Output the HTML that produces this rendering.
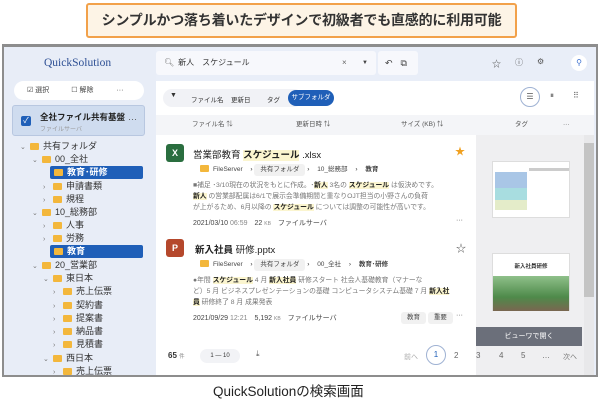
<!DOCTYPE html>
<html><head><meta charset="utf-8"><style>
*{box-sizing:border-box;margin:0;padding:0}
body{width:600px;height:407px;background:#fff;font-family:"Liberation Sans","Noto Sans CJK JP",sans-serif;position:relative;overflow:hidden;color:#333}
.a{position:absolute}
.banner{left:86px;top:3px;width:431px;height:35px;border:2px solid #f2a14a;background:#fdf4e6;border-radius:3px;font-size:14px;font-weight:bold;color:#333;text-align:center;line-height:31px;white-space:nowrap;letter-spacing:-0.2px}
.frame{left:2px;top:44px;width:596px;height:333px;border:2px solid #8d8d8d;border-top:3px solid #8d8d8d;background:#e9eef8;overflow:hidden}
.side{left:0;top:0;width:152px;height:330px;background:#e8edf7}
.t{font-size:9px;color:#333;white-space:nowrap;line-height:12px}
.fold{display:inline-block;width:9px;height:7px;background:#f3b73c;border-radius:1px;margin-right:4px;vertical-align:-1px}
.chev{font-size:7px;color:#777;display:inline-block;width:10px}
.sel{background:#1f5fb8;color:#fff;font-weight:bold;border-radius:2px}
.chip{display:inline-block;font-size:6.5px;padding:2px 6px;background:#f1f1f1;border-radius:3px;color:#444;line-height:8px}
.hl{background:#fbf5cf;font-weight:bold;color:#222}
.nw{white-space:nowrap}
</style></head><body>
<div class="a banner">シンプルかつ落ち着いたデザインで初級者でも直感的に利用可能</div>
<div class="a frame">
 <div class="a side">
  <div class="a" style="left:40px;top:10px;font-family:'Liberation Serif',serif;font-size:11.5px;color:#2d4f94">QuickSolution</div>
  <div class="a nw" style="left:10px;top:34px;width:130px;height:19px;background:#fff;border-radius:10px;font-size:7px;line-height:19px;color:#444">
   <span style="margin-left:13px">☑ 選択</span><span style="margin-left:22px">☐ 解除</span><span style="margin-left:23px">···</span></div>
  <div class="a" style="left:8px;top:58px;width:133px;height:31px;background:#cfdcef;border:1px solid #b8c7e0;border-radius:3px">
   <div class="a" style="left:8px;top:10px;width:10px;height:10px;background:#1f5fb8;border-radius:2px;color:#fff;font-size:8px;line-height:10px;text-align:center">✓</div>
   <div class="a nw" style="left:27px;top:5px;font-size:8.5px;font-weight:bold;color:#222">全社ファイル共有基盤</div>
   <div class="a nw" style="left:27px;top:18px;font-size:6px;color:#999">ファイルサーバ</div>
   <div class="a" style="left:115px;top:8px;font-size:9px;color:#555">···</div></div>
  <div class="a t" style="left:16px;top:93px"><span class="chev">⌄</span><span class="fold"></span>共有フォルダ</div>
  <div class="a t" style="left:28px;top:106px"><span class="chev">⌄</span><span class="fold"></span>00_全社</div>
  <div class="a t sel" style="left:46px;top:119px;width:93px;height:13px;line-height:13px;padding-left:4px"><span class="fold"></span>教育･研修</div>
  <div class="a t" style="left:39px;top:133px"><span class="chev">›</span><span class="fold"></span>申請書類</div>
  <div class="a t" style="left:39px;top:146px"><span class="chev">›</span><span class="fold"></span>規程</div>
  <div class="a t" style="left:28px;top:159px"><span class="chev">⌄</span><span class="fold"></span>10_総務部</div>
  <div class="a t" style="left:39px;top:172px"><span class="chev">›</span><span class="fold"></span>人事</div>
  <div class="a t" style="left:39px;top:185px"><span class="chev">›</span><span class="fold"></span>労務</div>
  <div class="a t sel" style="left:46px;top:198px;width:93px;height:13px;line-height:13px;padding-left:4px"><span class="fold"></span>教育</div>
  <div class="a t" style="left:28px;top:212px"><span class="chev">⌄</span><span class="fold"></span>20_営業部</div>
  <div class="a t" style="left:39px;top:225px"><span class="chev">⌄</span><span class="fold"></span>東日本</div>
  <div class="a t" style="left:49px;top:238px"><span class="chev">›</span><span class="fold"></span>売上伝票</div>
  <div class="a t" style="left:49px;top:252px"><span class="chev">›</span><span class="fold"></span>契約書</div>
  <div class="a t" style="left:49px;top:265px"><span class="chev">›</span><span class="fold"></span>提案書</div>
  <div class="a t" style="left:49px;top:278px"><span class="chev">›</span><span class="fold"></span>納品書</div>
  <div class="a t" style="left:49px;top:291px"><span class="chev">›</span><span class="fold"></span>見積書</div>
  <div class="a t" style="left:39px;top:305px"><span class="chev">⌄</span><span class="fold"></span>西日本</div>
  <div class="a t" style="left:49px;top:318px"><span class="chev">›</span><span class="fold"></span>売上伝票</div>
 </div>
 <!-- search -->
 <div class="a nw" style="left:152px;top:4px;width:220px;height:24px;background:#f7f8fc;border-radius:3px;font-size:8px;line-height:24px;color:#333">
  <span style="color:#777;margin-left:8px">🔍︎</span><span style="margin-left:4px">新人　スケジュール</span>
  <span class="a" style="left:186px;top:0;color:#666">×</span><span class="a" style="left:206px;top:0;color:#444;font-size:6px">▼</span></div>
 <div class="a nw" style="left:374px;top:4px;width:40px;height:24px;background:#f7f8fc;border-radius:3px;font-size:9px;line-height:24px;color:#444"><span style="margin-left:7px">↶</span><span style="margin-left:8px">⧉</span></div>
 <div class="a" style="left:488px;top:10px;font-size:9px;color:#555">☆</div>
 <div class="a" style="left:511px;top:10px;font-size:8px;color:#555">ⓘ</div>
 <div class="a" style="left:533px;top:10px;font-size:8px;color:#555">⚙</div>
 <div class="a" style="left:567px;top:8px;width:16px;height:16px;background:#fff;border-radius:50%;font-size:8px;color:#3a6fd0;text-align:center;line-height:16px">⚲</div>
 <!-- main panel -->
 <div class="a nw" style="left:152px;top:34px;width:438px;height:296px;background:#fff">
  <div class="a" style="left:7px;top:8px;width:140px;height:18px;background:#f1f2f6;border-radius:9px"></div>
  <div class="a" style="left:14px;top:11px;font-size:7px">▼</div>
  <div class="a" style="left:35px;top:13px;font-size:6.5px">ファイル名</div>
  <div class="a" style="left:75px;top:13px;font-size:6.5px">更新日</div>
  <div class="a" style="left:111px;top:13px;font-size:6.5px">タグ</div>
  <div class="a" style="left:132px;top:9px;width:46px;height:16px;background:#1f5fb8;border-radius:8px;color:#fff;font-size:6.5px;line-height:16px;text-align:center">サブフォルダ</div>
  <div class="a" style="left:364px;top:6px;width:20px;height:20px;border:1px solid #9fb2d3;border-radius:50%;font-size:8px;text-align:center;line-height:18px;color:#555">☰</div>
  <div class="a" style="left:394px;top:10px;font-size:8px;color:#666">⏸</div>
  <div class="a" style="left:417px;top:10px;font-size:8px;color:#666">⠿</div>
  <div class="a" style="left:0;top:34px;width:438px;height:20px;background:#f4f5f8;font-size:6.5px;color:#555;line-height:20px">
   <span class="a" style="left:36px">ファイル名 ⇅</span><span class="a" style="left:140px">更新日時 ⇅</span><span class="a" style="left:245px">サイズ (KB) ⇅</span><span class="a" style="left:359px">タグ</span><span class="a" style="left:407px">···</span></div>
  <!-- preview -->
  <div class="a" style="left:320px;top:54px;width:108px;height:242px;background:#efeff1"></div>
  <div class="a" style="left:428px;top:54px;width:10px;height:242px;background:#e8e8ea"></div>
  <div class="a" style="left:428px;top:62px;width:10px;height:154px;background:#c4c4c4"></div>
  <div class="a" style="left:336px;top:80px;width:78px;height:57px;background:#fff;border:1px solid #ddd">
   <div class="a" style="left:2px;top:10px;width:32px;height:16px;background:#a9c6e6"></div>
   <div class="a" style="left:2px;top:26px;width:32px;height:12px;background:#a8dde0"></div>
   <div class="a" style="left:2px;top:38px;width:32px;height:10px;background:#e4ecc9"></div>
   <div class="a" style="left:36px;top:6px;width:40px;height:3px;background:#ccc"></div></div>
  <div class="a" style="left:336px;top:172px;width:78px;height:58px;background:#fff;border:1px solid #ddd">
   <div class="a" style="left:0;top:8px;width:76px;text-align:center;font-size:5.5px;font-weight:bold">新入社員研修</div>
   <div class="a" style="left:0;top:22px;width:76px;height:35px;background:linear-gradient(#8fc08a,#4e8a4a 60%,#7a6650)"></div></div>
  <div class="a" style="left:320px;top:246px;width:106px;height:19px;background:#6b6f7a;color:#fff;font-size:7px;text-align:center;line-height:19px">ビューワで開く</div>
  <!-- result 1 -->
  <div class="a" style="left:10px;top:63px;width:18px;height:18px;background:#2a6e3f;border-radius:3px;color:#fff;font-weight:bold;font-size:9px;text-align:center;line-height:18px">X</div>
  <div class="a" style="left:37px;top:66px;font-size:9.5px;color:#222">営業部教育 <span class="hl">スケジュール</span> .xlsx</div>
  <div class="a" style="left:299px;top:62px;font-size:10px;color:#f0a020">★</div>
  <div class="a" style="left:38px;top:82px;font-size:6.5px"><span class="chip" style="background:#fff"><span class="fold"></span>FileServer</span> › <span class="chip">共有フォルダ</span> › <span class="chip" style="background:#fff">10_総務部</span> › <span class="chip" style="background:#fff;font-weight:bold">教育</span></div>
  <div class="a" style="left:37px;top:99px;font-size:6.8px;line-height:11px;color:#777;width:275px">■補足 ･3/10現在の状況をもとに作成。･<span class="hl">新人</span> 3名の <span class="hl">スケジュール</span> は仮決めです。<br><span class="hl">新人</span> の営業部配属は6/1で展示会準備期間と重なりOJT担当の小野さんの負荷<br>が上がるため、6月以降の <span class="hl">スケジュール</span> については調整の可能性が高いです。</div>
  <div class="a" style="left:37px;top:137px;font-size:7px;color:#444">2021/03/10 <span style="color:#888">06:59</span>　22 <span style="font-size:5px;color:#888">KB</span>　ファイルサーバ</div>
  <div class="a" style="left:300px;top:136px;font-size:7px;color:#555">···</div>
  <!-- result 2 -->
  <div class="a" style="left:10px;top:158px;width:18px;height:18px;background:#b5482c;border-radius:3px;color:#fff;font-weight:bold;font-size:9px;text-align:center;line-height:18px">P</div>
  <div class="a" style="left:39px;top:161px;font-size:9.5px;color:#222"><span class="hl" style="background:none">新入社員</span> 研修.pptx</div>
  <div class="a" style="left:300px;top:159px;font-size:10px;color:#555">☆</div>
  <div class="a" style="left:38px;top:177px;font-size:6.5px"><span class="chip" style="background:#fff"><span class="fold"></span>FileServer</span> › <span class="chip">共有フォルダ</span> › <span class="chip" style="background:#fff">00_全社</span> › <span class="chip" style="background:#fff;font-weight:bold">教育･研修</span></div>
  <div class="a" style="left:37px;top:194px;font-size:6.8px;line-height:11px;color:#777;width:275px">●年間 <span class="hl">スケジュール</span> 4 月 <span class="hl">新入社員</span> 研修スタート 社会人基礎教育（マナーな<br>ど）5 月 ビジネスプレゼンテーションの基礎 コンピュータシステム基礎 7 月 <span class="hl">新入社</span><br><span class="hl">員</span> 研修終了 8 月 成果発表</div>
  <div class="a" style="left:37px;top:232px;font-size:7px;color:#444">2021/09/29 <span style="color:#888">12:21</span>　5,192 <span style="font-size:5px;color:#888">KB</span>　ファイルサーバ</div>
  <div class="a" style="left:245px;top:231px;font-size:6.5px"><span class="chip">教育</span> <span class="chip">重要</span></div>
  <div class="a" style="left:300px;top:231px;font-size:7px;color:#555">···</div>
  <!-- pagination -->
  <div class="a" style="left:12px;top:270px;font-size:8px;font-weight:bold;color:#333">65 <span style="font-size:5.5px;color:#888;font-weight:normal">件</span></div>
  <div class="a" style="left:44px;top:268px;width:40px;height:14px;background:#f2f3f6;border-radius:7px;font-size:6px;text-align:center;line-height:14px">1 — 10</div>
  <div class="a" style="left:100px;top:268px;font-size:8px;color:#555">⤓</div>
  <div class="a" style="left:248px;top:271px;font-size:7px;color:#aaa">前へ</div>
  <div class="a" style="left:270px;top:264px;width:20px;height:20px;border:1px solid #9fb2d3;border-radius:50%;font-size:8px;text-align:center;line-height:18px;color:#1f5fb8">1</div>
  <div class="a" style="left:298px;top:270px;font-size:8px;color:#666">2</div>
  <div class="a" style="left:320px;top:270px;font-size:8px;color:#666">3</div>
  <div class="a" style="left:343px;top:270px;font-size:8px;color:#666">4</div>
  <div class="a" style="left:365px;top:270px;font-size:8px;color:#666">5</div>
  <div class="a" style="left:386px;top:270px;font-size:8px;color:#666">…</div>
  <div class="a" style="left:407px;top:271px;font-size:7px;color:#777">次へ</div>
 </div>
</div>
<div class="a" style="left:213px;top:380px;font-size:13.5px;color:#222">QuickSolutionの検索画面</div>
</body></html>
